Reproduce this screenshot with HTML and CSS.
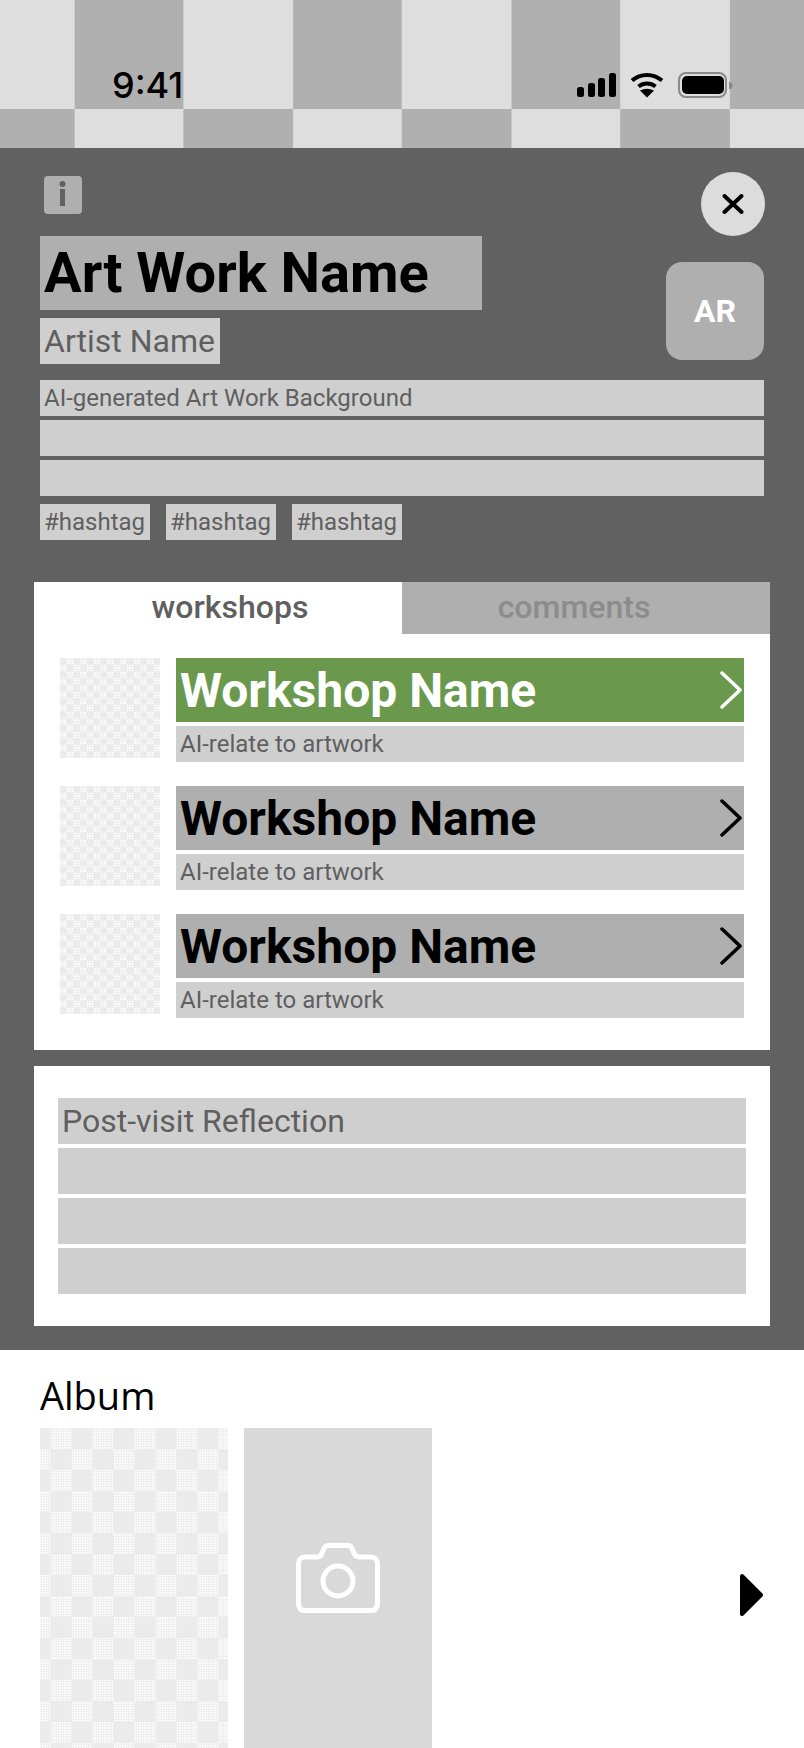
FILE: index.html
```html
<!DOCTYPE html>
<html lang="en">

<head>
    <meta charset="UTF-8">
    <meta name="viewport" content="width=device-width, initial-scale=1.0">
    <title>Art Work</title>
    <link rel="stylesheet" href="styles.css">
</head>

<body>

    <div class="topBackdrop">
        <div class="statusBar">
            <span class="time">9:41</span>
            <div class="statusIcons">
                <svg class="signal" width="40" height="25" viewBox="0 0 40 25">
                    <rect x="0" y="14" width="7" height="10" rx="2.5"></rect>
                    <rect x="11" y="10" width="7" height="14" rx="2.5"></rect>
                    <rect x="21" y="5" width="7" height="19" rx="2.5"></rect>
                    <rect x="32" y="0" width="7" height="24" rx="2.5"></rect>
                </svg>
                <svg class="wifi" width="34" height="26" viewBox="0 0 34 26">
                    <path d="M2 8.500C10.500 1 23.500 1 32 8.500" fill="none" stroke="#000" stroke-width="4"></path>
                    <path d="M8.500 14.500C13.500 10.500 20.500 10.500 25.500 14.500" fill="none" stroke="#000" stroke-width="4"></path>
                    <path d="M10 18.500Q17 15 24 18.500L17 25.500Z"></path>
                </svg>
                <svg class="battery" width="56" height="27" viewBox="0 0 56 27">
                    <rect x="2" y="1" width="47" height="24" rx="7" fill="none" stroke="#8a8a8a" stroke-width="2"></rect>
                    <rect x="5" y="4" width="42" height="18" rx="5"></rect>
                    <path d="M52 10a3.500 3.500 0 0 1 0 7z" fill="#8a8a8a"></path>
                </svg>
            </div>
        </div>
    </div>

    <div class="panel">
        <div class="artInfo">
            <div class="actionRow">
                <svg class="infoIcon" width="38" height="38" viewBox="0 0 38 38">
                    <rect width="38" height="38" rx="4" fill="#afafaf"></rect>
                    <circle cx="18.500" cy="8" r="3" fill="#616161"></circle>
                    <rect x="16" y="13" width="5" height="17" fill="#616161"></rect>
                </svg>
                <div class="closeBtn">
                    <svg width="22" height="20" viewBox="0 0 22 20">
                        <path d="M2.500 2L19.500 18M19.500 2L2.500 18" fill="none" stroke="#000" stroke-width="4" stroke-linecap="round"></path>
                    </svg>
                </div>
            </div>

            <div class="titleRow">
                <div class="titleCol">
                    <div class="artTitle">Art Work Name</div>
                    <div class="artistName">Artist Name</div>
                </div>
                <div class="avatar">AR</div>
            </div>

            <div class="bgLines">
                <div class="bgLine">AI-generated Art Work Background</div>
                <div class="bgLine"></div>
                <div class="bgLine"></div>
            </div>

            <div class="tags">
                <span class="tag">#hashtag</span>
                <span class="tag">#hashtag</span>
                <span class="tag">#hashtag</span>
            </div>
        </div>

        <div class="workshopCard">
            <div class="tabs">
                <div class="tab activeTab">workshops</div>
                <div class="tab otherTab">comments</div>
            </div>
            <div class="workshopList">
                <div class="workshop">
                    <div class="thumb"></div>
                    <div class="workshopText">
                        <div class="workshopName greenName">
                            <span>Workshop Name</span>
                            <svg width="22" height="38" viewBox="0 0 22 38">
                                <path d="M2 2L20 19L2 36" fill="none" stroke="#fff" stroke-width="3.500" stroke-linecap="round" stroke-linejoin="round"></path>
                            </svg>
                        </div>
                        <div class="workshopSub">AI-relate to artwork</div>
                    </div>
                </div>
                <div class="workshop">
                    <div class="thumb"></div>
                    <div class="workshopText">
                        <div class="workshopName">
                            <span>Workshop Name</span>
                            <svg width="22" height="38" viewBox="0 0 22 38">
                                <path d="M2 2L20 19L2 36" fill="none" stroke="#000" stroke-width="3.500" stroke-linecap="round" stroke-linejoin="round"></path>
                            </svg>
                        </div>
                        <div class="workshopSub">AI-relate to artwork</div>
                    </div>
                </div>
                <div class="workshop">
                    <div class="thumb"></div>
                    <div class="workshopText">
                        <div class="workshopName">
                            <span>Workshop Name</span>
                            <svg width="22" height="38" viewBox="0 0 22 38">
                                <path d="M2 2L20 19L2 36" fill="none" stroke="#000" stroke-width="3.500" stroke-linecap="round" stroke-linejoin="round"></path>
                            </svg>
                        </div>
                        <div class="workshopSub">AI-relate to artwork</div>
                    </div>
                </div>
            </div>
        </div>

        <div class="reflectionCard">
            <div class="reflectionLine">Post-visit Reflection</div>
            <div class="reflectionLine"></div>
            <div class="reflectionLine"></div>
            <div class="reflectionLine"></div>
        </div>
    </div>

    <div class="album">
        <div class="albumTitle">Album</div>
        <div class="albumRow">
            <div class="albumPhoto"></div>
            <div class="albumAdd">
                <svg width="84" height="70" viewBox="0 0 84 70">
                    <path d="M9 14H21C23 14 24.500 13 25.300 11.500L28.500 4.500C29.200 3 30.500 2.500 32.500 2.500H51.500C53.500 2.500 54.800 3 55.500 4.500L58.700 11.500C59.500 13 61 14 63 14H75C79 14 81.500 17 81.500 21V60C81.500 65 79 67.500 75 67.500H9C5 67.500 2.500 65 2.500 60V21C2.500 17 5 14 9 14Z" fill="none" stroke="#fff" stroke-width="5" stroke-linejoin="round"></path>
                    <circle cx="42" cy="38" r="15" fill="none" stroke="#fff" stroke-width="5"></circle>
                </svg>
            </div>
            <svg class="albumNext" width="23" height="42" viewBox="0 0 23 42">
                <path d="M2 2L21 21L2 40Z" stroke="#000" stroke-width="4" stroke-linejoin="round"></path>
            </svg>
        </div>
    </div>

</body>

</html>
```

FILE: styles.css
```css
* {
    box-sizing: border-box;
}

body {
    margin: 0;
    width: 804px;
    height: 1748px;
    overflow: hidden;
    background-color: #fff;
    font-family: Roboto, "Liberation Sans", sans-serif;
}

.topBackdrop {
    height: 148px;
    background-image: conic-gradient(#b0b0b0 25%, #dedede 0 50%, #b0b0b0 0 75%, #dedede 0);
    background-size: 218.4px 218px;
    background-position: -35px 0;
}

.statusBar {
    display: flex;
    justify-content: space-between;
    align-items: flex-start;
    padding: 65px 71px 0 112px;
}

.time {
    font-family: Inter, "Liberation Sans", sans-serif;
    font-size: 36px;
    font-weight: 500;
    line-height: 40px;
    color: #000;
}

.statusIcons {
    display: flex;
    align-items: flex-start;
    gap: 13px;
    padding-top: 7px;
}

.signal {
    margin-top: 1px;
}

.panel {
    height: 1202px;
    padding: 24px 34px;
    background-color: #616161;
}

.artInfo {
    padding: 0 6px;
}

.actionRow {
    display: flex;
    justify-content: space-between;
    align-items: flex-start;
    height: 64px;
}

.infoIcon {
    margin: 4px 0 0 4px;
}

.closeBtn {
    display: flex;
    justify-content: center;
    align-items: center;
    width: 64px;
    height: 64px;
    margin-right: -1px;
    border-radius: 50%;
    background-color: #dcdcdc;
}

.titleRow {
    display: flex;
    justify-content: space-between;
    align-items: flex-start;
}

.titleCol {
    display: flex;
    flex-direction: column;
    align-items: flex-start;
    gap: 8px;
}

.artTitle {
    width: 442px;
    height: 74px;
    padding-left: 4px;
    background-color: #afafaf;
    color: #000;
    font-size: 56px;
    font-weight: 700;
    line-height: 74px;
}

.artistName {
    height: 46px;
    padding: 0 5px 0 4px;
    background-color: #cfcfcf;
    color: #5f5f5f;
    font-size: 32px;
    line-height: 46px;
}

.avatar {
    display: flex;
    justify-content: center;
    align-items: center;
    width: 98px;
    height: 98px;
    margin-top: 26px;
    border-radius: 16px;
    background-color: #afafaf;
    color: #fff;
    font-size: 32px;
    font-weight: 700;
}

.bgLines {
    display: flex;
    flex-direction: column;
    gap: 4px;
    margin-top: 16px;
}

.bgLine {
    height: 36px;
    padding-left: 4px;
    background-color: #cfcfcf;
    color: #5f5f5f;
    font-size: 24px;
    line-height: 36px;
}

.tags {
    display: flex;
    gap: 16px;
    margin-top: 8px;
}

.tag {
    width: 110px;
    height: 36px;
    padding-left: 4px;
    background-color: #cfcfcf;
    color: #5f5f5f;
    font-size: 24px;
    line-height: 36px;
}

.workshopCard {
    margin-top: 42px;
    background-color: #fff;
}

.tabs {
    display: flex;
}

.tab {
    width: 50%;
    height: 52px;
    font-size: 32px;
    font-weight: 500;
    line-height: 50px;
    text-align: center;
}

.activeTab {
    padding-left: 24px;
    background-color: #fff;
    color: #5f5f5f;
}

.otherTab {
    padding-right: 24px;
    background-color: #afafaf;
    color: #8c8c8c;
}

.workshopList {
    display: flex;
    flex-direction: column;
    gap: 24px;
    padding: 24px 26px 32px;
}

.workshop {
    display: flex;
    align-items: flex-start;
    gap: 16px;
}

.thumb {
    flex: none;
    width: 100px;
    height: 100px;
    background-image:
        conic-gradient(transparent 25%, #ebebeb 0 50%, transparent 0 75%, #ebebeb 0),
        radial-gradient(circle, #ebebeb 0.9px, transparent 1.1px);
    background-size: 13.4px 13.4px, 2.5px 2.5px;
}

.workshopText {
    flex: 1;
    display: flex;
    flex-direction: column;
    gap: 4px;
}

.workshopName {
    display: flex;
    justify-content: space-between;
    align-items: center;
    height: 64px;
    padding: 0 2px 0 4px;
    background-color: #afafaf;
    color: #000;
    font-size: 48px;
    font-weight: 700;
}

.greenName {
    background-color: #6a994e;
    color: #fff;
}

.workshopSub {
    height: 36px;
    padding-left: 4px;
    background-color: #cfcfcf;
    color: #5f5f5f;
    font-size: 24px;
    line-height: 36px;
}

.reflectionCard {
    display: flex;
    flex-direction: column;
    gap: 4px;
    margin-top: 16px;
    padding: 32px 24px;
    background-color: #fff;
}

.reflectionLine {
    height: 46px;
    padding-left: 4px;
    background-color: #cfcfcf;
    color: #5f5f5f;
    font-size: 32px;
    line-height: 46px;
}

.album {
    padding: 0 41px 0 40px;
}

.albumTitle {
    height: 78px;
    padding-top: 19px;
    color: #000;
    font-family: "Open Sans", sans-serif;
    font-size: 38px;
    line-height: 52px;
}

.albumRow {
    display: flex;
    gap: 16px;
    height: 320px;
}

.albumPhoto {
    width: 188px;
    background-image:
        conic-gradient(transparent 25%, #ebebeb 0 50%, transparent 0 75%, #ebebeb 0),
        radial-gradient(circle, #ebebeb 0.9px, transparent 1.1px);
    background-size: 42px 42px, 2.5px 2.5px;
    background-position: -10.5px 0, 0 0;
}

.albumAdd {
    display: flex;
    justify-content: center;
    align-items: flex-start;
    width: 188px;
    padding-top: 115px;
    background-color: #d9d9d9;
}

.albumNext {
    margin: 146px 0 0 auto;
}
```
